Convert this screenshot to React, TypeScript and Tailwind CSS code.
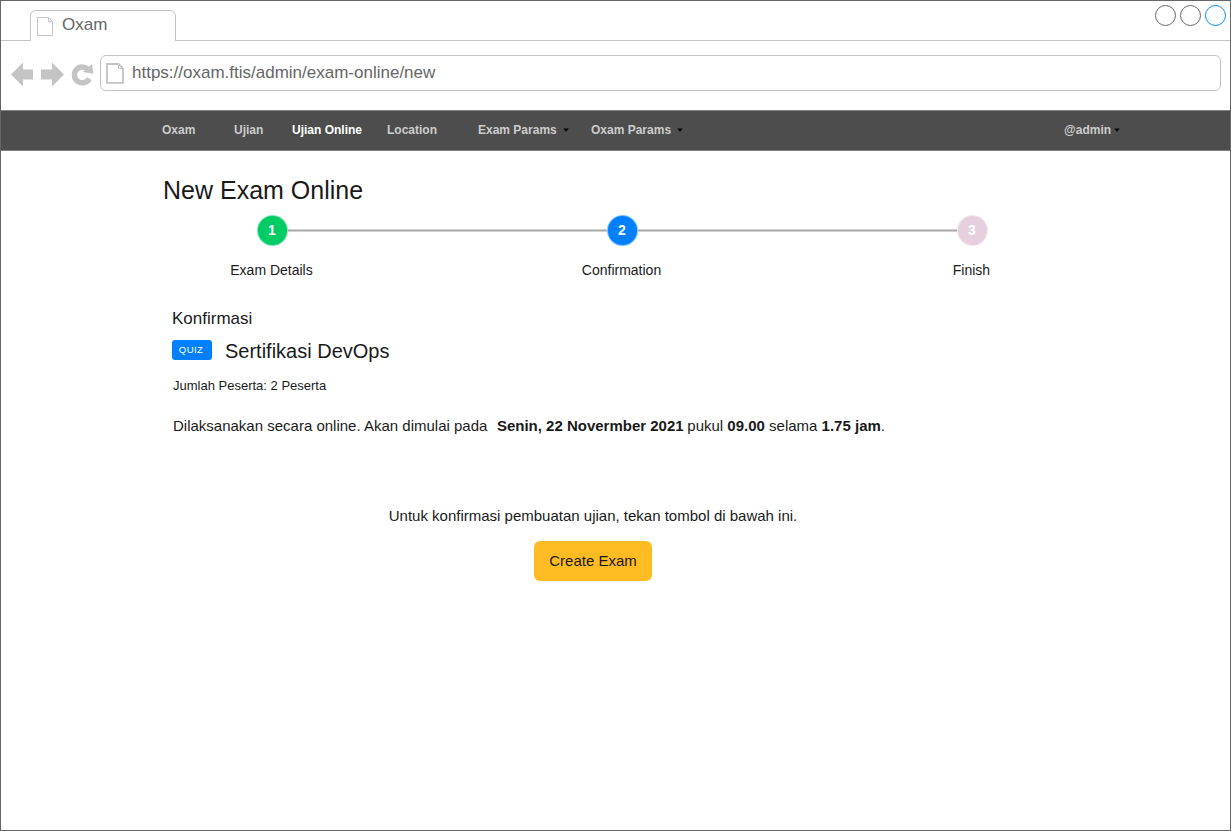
import React from "react";

function TabPageIcon() {
  return (
    <svg className="mt-[5px] ml-[6px] h-[20px] w-[17px] shrink-0" viewBox="0 0 17 20" fill="none" stroke="#c4c4c4">
      <path d="M0.5 1.5H11.5L15.5 5.5V19.5H0.5Z" />
      <path d="M11.5 1.5V5.5H15.5" />
    </svg>
  );
}

function AddressPageIcon() {
  return (
    <svg className="h-[21px] w-[18px] shrink-0" viewBox="0 0 18 21" fill="none" stroke="#c4c4c4">
      <path d="M1 1H12.5L17 5.5V19.8H1Z" strokeWidth="1.8" />
      <path d="M12.5 1V5.5H17" strokeWidth="1" />
    </svg>
  );
}

function Caret() {
  return (
    <svg className="h-[4px] w-[6px]" viewBox="0 0 6 4">
      <path d="M0.3 0.5H5.7L3 3.7Z" fill="#000" />
    </svg>
  );
}

function BrowserChrome() {
  return (
    <header className="h-[109px] text-[17px] leading-5 text-[#666666]">
      <div className="flex h-[40px] items-end">
        <div className="h-px w-[29px] bg-[#c4c4c4]" />
        <div className="flex h-[31px] w-[146px] items-start rounded-t-[6px] border border-b-0 border-[#c4c4c4]">
          <TabPageIcon />
          <span className="mt-[4px] ml-[8px]">Oxam</span>
        </div>
        <div className="flex h-[40px] flex-1 items-start justify-end gap-[4px] border-b border-[#c4c4c4] pt-[4px] pr-[4px]">
          <div className="size-[21px] rounded-full border border-[#666666]" />
          <div className="size-[21px] rounded-full border border-[#666666]" />
          <div className="size-[21px] rounded-full border border-[#008cff]" />
        </div>
      </div>
      <div className="flex pt-[14px] pl-[10px]">
        <svg className="mt-[6px] h-[26px] w-[83px]" viewBox="0 0 83 26" fill="#c4c4c4">
          <path d="M0 13.5L12 1.5V8.5H22V18.5H12V25.5Z" />
          <path d="M53 13.5L41 1.5V8.5H30V18.5H41V25.5Z" />
          <path d="M78.3 17.6A7.9 7.9 0 1 1 76.9 8.3" fill="none" stroke="#c4c4c4" strokeWidth="5.5" />
          <path d="M81 3L82.5 12.8L71.8 10.9Z" />
        </svg>
        <div className="ml-[6px] flex h-[36px] w-[1121px] items-start rounded-[6px] border border-[#c4c4c4] pt-[7px] pl-[5px]">
          <AddressPageIcon />
          <span className="ml-[8px]">https://oxam.ftis/admin/exam-online/new</span>
        </div>
      </div>
    </header>
  );
}

function NavBar() {
  return (
    <nav className="flex h-[41px] items-center border-y border-[#808080] bg-[#4d4d4d] pb-[2px] pl-[161px] text-[12px] leading-4 font-bold text-[#cccccc]">
      <a className="w-[72px]">Oxam</a>
      <a className="w-[58px]">Ujian</a>
      <a className="w-[95px] text-white">Ujian Online</a>
      <a className="w-[91px]">Location</a>
      <a className="flex w-[113px] items-center">
        <span className="w-[85px]">Exam Params</span>
        <Caret />
      </a>
      <a className="flex w-[473px] items-center">
        <span className="w-[86px]">Oxam Params</span>
        <Caret />
      </a>
      <a className="flex items-center">
        <span className="w-[50px]">@admin</span>
        <Caret />
      </a>
    </nav>
  );
}

function Step({ n, label, color }: { n: number; label: string; color: string }) {
  return (
    <li className="flex w-[119px] flex-col items-center">
      <span className={`flex size-[31px] items-center justify-center rounded-full border border-white/50 pr-px pb-px text-[14px] leading-none font-bold text-white ${color}`}>
        {n}
      </span>
      <span className="mt-[14px] mr-[2px] text-[14px] leading-5">{label}</span>
    </li>
  );
}

function StepLine() {
  return <li className="-mx-[44px] mt-[14px] h-[3px] w-[319px] border-y border-[#d2d2d2] bg-[#a8a8a8]" />;
}

export default function App() {
  return (
    <div className="h-[831px] w-[1231px] overflow-hidden border border-[#666666] bg-white font-['Liberation_Sans',Arial,sans-serif] text-[#1a1a1a]">
      <BrowserChrome />
      <NavBar />
      <main className="pl-[162px]">
        <h1 className="pt-[24px] text-[25px] leading-[30px]">New Exam Online</h1>
        <ol className="mt-[10px] ml-[50px] flex items-start">
          <Step n={1} label="Exam Details" color="bg-[#00cc66]" />
          <StepLine />
          <Step n={2} label="Confirmation" color="bg-[#0080ff]" />
          <StepLine />
          <Step n={3} label="Finish" color="bg-[#e6d0de]" />
        </ol>
        <section className="ml-[9px]">
          <h2 className="mt-[29px] text-[17px] leading-5">Konfirmasi</h2>
          <div className="mt-[10px] flex items-center">
            <span className="-mt-[2px] flex h-[20px] w-[40px] items-center justify-center rounded-[3px] bg-[#0080ff] pr-[2px] text-[9.5px] leading-none font-normal tracking-[0.4px] text-white">
              QUIZ
            </span>
            <h3 className="ml-[13px] text-[20px] leading-6">Sertifikasi DevOps</h3>
          </div>
          <p className="mt-[13px] ml-px text-[13px] leading-5">Jumlah Peserta: 2 Peserta</p>
          <p className="mt-[20px] ml-px flex text-[15px] leading-5 whitespace-pre">
            <span className="mr-[1.2px]">Dilaksanakan secara online. Akan dimulai pada  </span>
            <b>Senin, 22 Novermber 2021</b>
            <span className="-ml-[0.5px]"> pukul </span>
            <b>09.00</b>
            <span> selama </span>
            <b>1.75 jam</b>
            <span>.</span>
          </p>
          <div className="mt-[70px] flex w-[842px] flex-col items-center">
            <p className="text-[15px] leading-5">Untuk konfirmasi pembuatan ujian, tekan tombol di bawah ini.</p>
            <button className="mt-[15px] h-[40px] w-[118px] rounded-[6px] bg-[#ffbb22] text-[15px]">Create Exam</button>
          </div>
        </section>
      </main>
    </div>
  );
}
